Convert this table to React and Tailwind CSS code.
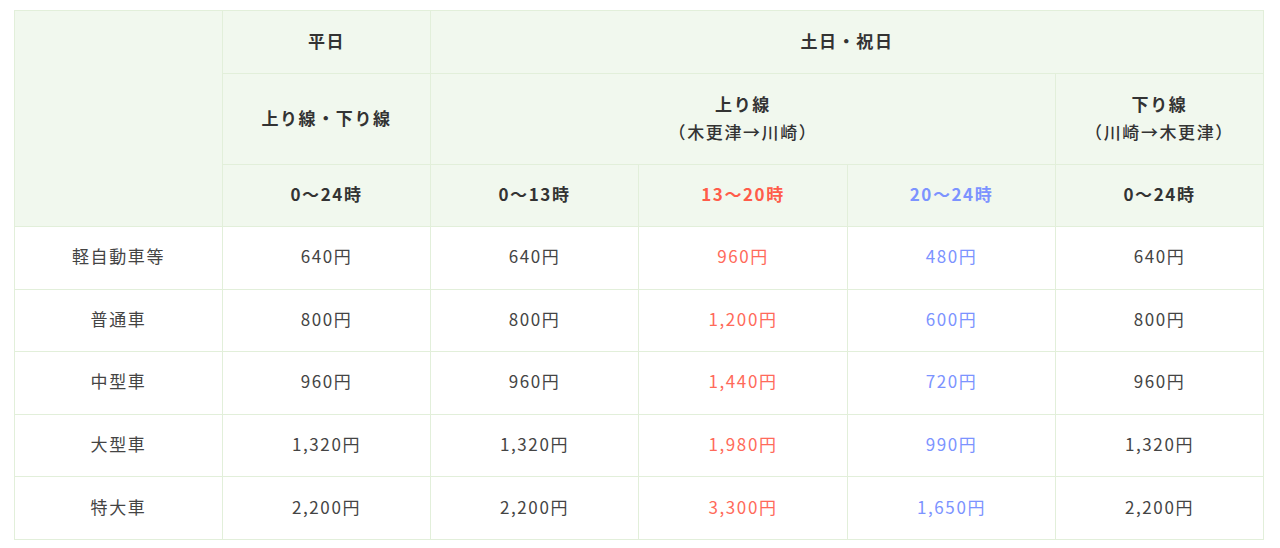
import React from "react";

const rows = [
  ["軽自動車等", "640円", "640円", "960円", "480円", "640円"],
  ["普通車", "800円", "800円", "1,200円", "600円", "800円"],
  ["中型車", "960円", "960円", "1,440円", "720円", "960円"],
  ["大型車", "1,320円", "1,320円", "1,980円", "990円", "1,320円"],
  ["特大車", "2,200円", "2,200円", "3,300円", "1,650円", "2,200円"],
];

const th = "border border-[#e2efda] bg-[#f1f8ee] font-bold text-center align-middle text-[#333] pb-[3px]";
const td = "border border-[#e2efda] bg-white text-center align-middle h-[62.6px] pb-[3px]";

export default function App() {
  return (
    <div className="w-[1280px] h-[548px] bg-white pt-[10px] pl-[14px]" style={{ fontFamily: '"Noto Sans CJK JP", "Noto Sans", sans-serif' }}>
      <table className="border-collapse table-fixed w-[1249px] text-[17px] leading-[28px] tracking-[1.6px]">
        <colgroup>
          <col className="w-[208px]" />
          <col className="w-[208px]" />
          <col className="w-[208px]" />
          <col className="w-[209px]" />
          <col className="w-[208px]" />
          <col className="w-[208px]" />
        </colgroup>
        <thead>
          <tr className="h-[63px]">
            <th rowSpan={3} className={th}></th>
            <th className={th}>平日</th>
            <th colSpan={4} className={th}>土日・祝日</th>
          </tr>
          <tr className="h-[91px]">
            <th className={th}>上り線・下り線</th>
            <th colSpan={3} className={th}>
              上り線<br />
              <span className="font-medium">（木更津→川崎）</span>
            </th>
            <th className={th}>
              下り線<br />
              <span className="font-medium">（川崎→木更津）</span>
            </th>
          </tr>
          <tr className="h-[62px]">
            <th className={th}>0～24時</th>
            <th className={th}>0～13時</th>
            <th className={`${th} !text-[#ff5c4a]`}>13～20時</th>
            <th className={`${th} !text-[#7c93ff]`}>20～24時</th>
            <th className={th}>0～24時</th>
          </tr>
        </thead>
        <tbody>
          {rows.map((r) => (
            <tr key={r[0]}>
              <td className={`${td} text-[#444]`}>{r[0]}</td>
              <td className={`${td} text-[#444]`}>{r[1]}</td>
              <td className={`${td} text-[#444]`}>{r[2]}</td>
              <td className={`${td} text-[#ff6a5a]`}>{r[3]}</td>
              <td className={`${td} text-[#7c93ff]`}>{r[4]}</td>
              <td className={`${td} text-[#444]`}>{r[5]}</td>
            </tr>
          ))}
        </tbody>
      </table>
    </div>
  );
}
